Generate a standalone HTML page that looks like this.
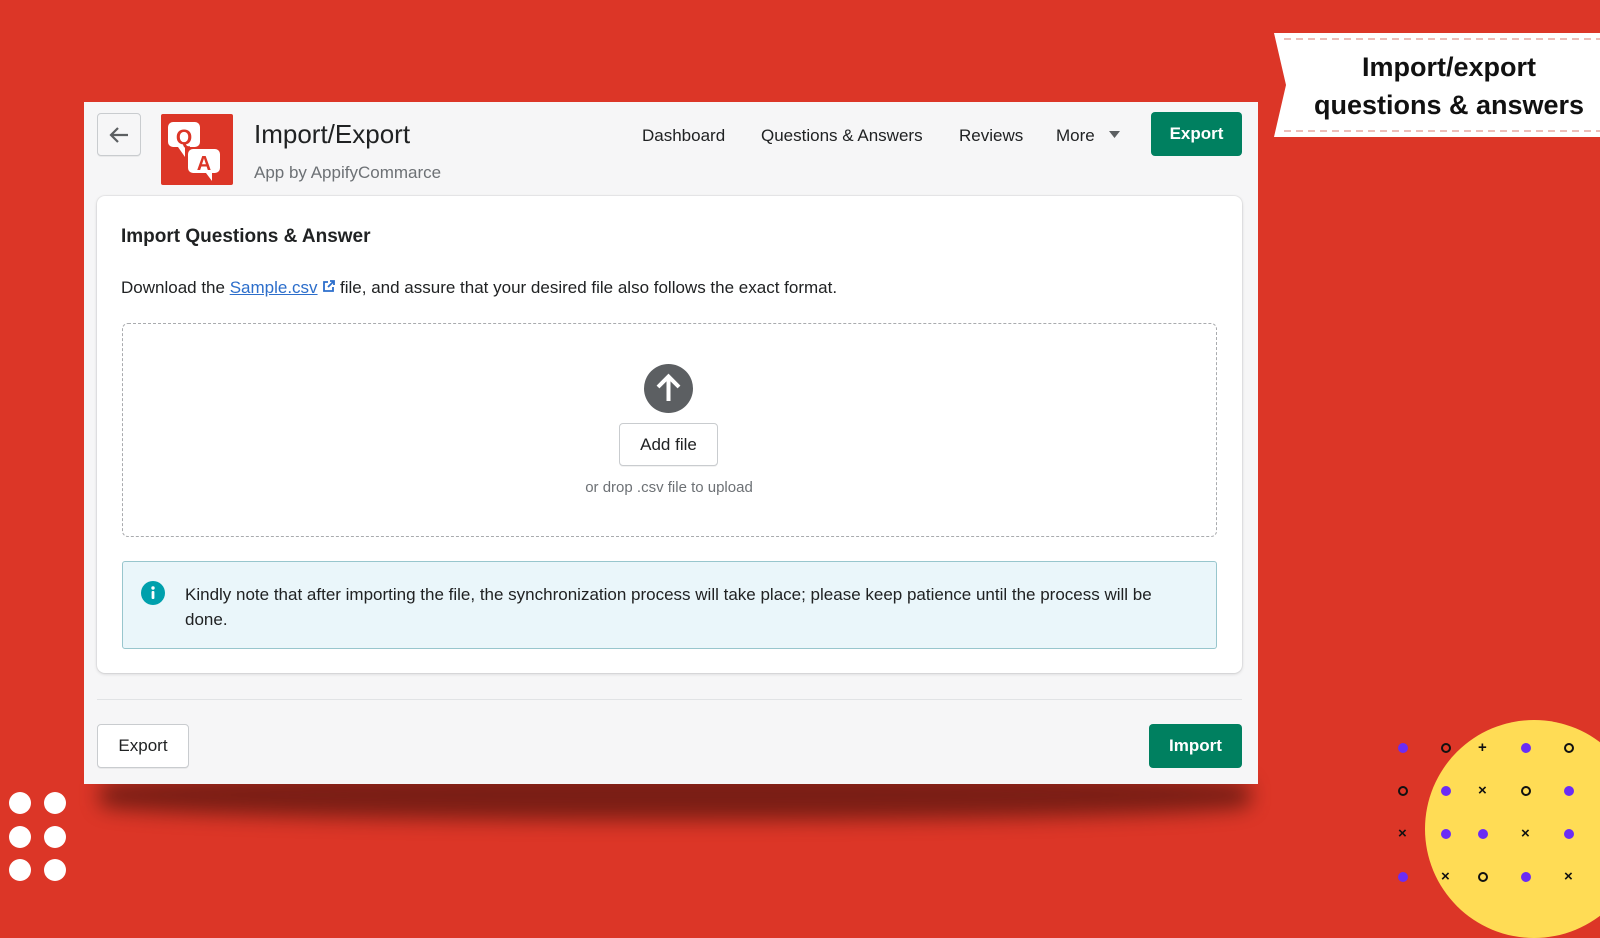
<!DOCTYPE html>
<html><head><meta charset="utf-8"><style>
*{box-sizing:border-box;margin:0;padding:0}
body{width:1600px;height:900px;background:#dc3627;position:relative;overflow:hidden;font-family:"Liberation Sans",sans-serif;color:#202223}
.abs{position:absolute}
.shadow{left:100px;top:770px;width:1150px;height:50px;background:#6a1a12;filter:blur(10px);border-radius:50%/30%;opacity:.85}
.panel{left:84px;top:102px;width:1174px;height:682px;background:#f6f6f7}
.btn{position:absolute;border:1px solid #c9cccf;background:#fff;border-radius:4px;font-size:17px;display:flex;align-items:center;justify-content:center;box-shadow:0 1px 0 rgba(0,0,0,.05)}
.gbtn{position:absolute;background:#008060;color:#fff;border-radius:4px;font-size:17px;font-weight:bold;display:flex;align-items:center;justify-content:center}
.nav{position:absolute;top:126px;font-size:17px;color:#202223}
.card{left:97px;top:196px;width:1145px;height:477px;background:#fff;border-radius:8px;box-shadow:0 0 0 1px rgba(63,63,68,.05),0 1px 3px rgba(63,63,68,.2)}
.dot{position:absolute;width:10px;height:10px;border-radius:50%;background:#6b2cf5;margin:-5px 0 0 -5px}
.o{position:absolute;width:10px;height:10px;border-radius:50%;border:2px solid #111;margin:-5px 0 0 -5px}
.x{position:absolute;font-size:15px;font-weight:bold;line-height:1;margin:-8px 0 0 -5px;color:#111}
.w{position:absolute;width:22px;height:22px;border-radius:50%;background:#fff}
</style></head><body>
<div class="abs shadow"></div>
<div class="abs panel"></div>
<div class="btn" style="left:97px;top:113px;width:44px;height:43px;background:#f6f6f7">
<svg width="22" height="18" viewBox="0 0 22 18"><path d="M20 9H3M10 2L3 9l7 7" stroke="#5c5f62" stroke-width="2.2" fill="none"/></svg></div>
<div class="abs" style="left:161px;top:114px;width:72px;height:71px;background:#dc3627;border-radius:2px">
<svg width="72" height="71" viewBox="0 0 72 71">
<path d="M12 8h22a5 5 0 015 5v15a5 5 0 01-5 5H24l0 10-7-10h-5a5 5 0 01-5-5V13a5 5 0 015-5z" fill="#fff"/>
<text x="23" y="30" font-size="21" font-weight="bold" fill="#dc3627" text-anchor="middle" font-family="Liberation Sans">Q</text>
<path d="M32 35h22a5 5 0 015 5v14a5 5 0 01-5 5h-3v8l-6-8H32a5 5 0 01-5-5V40a5 5 0 015-5z" fill="#fff"/>
<text x="43" y="56" font-size="20" font-weight="bold" fill="#dc3627" text-anchor="middle" font-family="Liberation Sans">A</text>
</svg></div>
<div class="abs" style="left:254px;top:119px;font-size:26px;color:#202223">Import/Export</div>
<div class="abs" style="left:254px;top:163px;font-size:17px;color:#6d7175">App by AppifyCommarce</div>
<div class="nav" style="left:642px">Dashboard</div>
<div class="nav" style="left:761px">Questions &amp; Answers</div>
<div class="nav" style="left:959px">Reviews</div>
<div class="nav" style="left:1056px">More</div>
<svg class="abs" style="left:1109px;top:131px" width="11" height="7"><path d="M0 0h11L5.5 7z" fill="#5c5f62"/></svg>
<div class="gbtn" style="left:1151px;top:112px;width:91px;height:44px">Export</div>

<div class="abs card"></div>
<div class="abs" style="left:121px;top:226px;font-size:19px;font-weight:bold;color:#202223">Import Questions &amp; Answer</div>
<div class="abs" style="left:121px;top:278px;font-size:17px;color:#202223">Download the <span style="color:#2c6ecb;text-decoration:underline">Sample.csv</span> <svg width="13" height="13" viewBox="0 0 13 13" style="vertical-align:0px"><path d="M6 2H2v9h9V7M8 1h4v4M12 1L6 7" stroke="#2c6ecb" stroke-width="1.8" fill="none"/></svg> file, and assure that your desired file also follows the exact format.</div>
<div class="abs" style="left:122px;top:323px;width:1095px;height:214px;border:1px dashed #a9abae;border-radius:6px"></div>
<svg class="abs" style="left:644px;top:364px" width="49" height="49" viewBox="0 0 49 49"><circle cx="24.5" cy="24.5" r="24.5" fill="#5c5f62"/><path d="M24.5 37V13M14 23l10.5-10.5L35 23" stroke="#fff" stroke-width="4" fill="none"/></svg>
<div class="btn" style="left:619px;top:423px;width:99px;height:43px">Add file</div>
<div class="abs" style="left:0;width:1338px;text-align:center;top:479px;font-size:15px;color:#6d7175">or drop .csv file to upload</div>
<div class="abs" style="left:122px;top:561px;width:1095px;height:88px;background:#eaf6fa;border:1px solid #98c6cd;border-radius:3px"></div>
<svg class="abs" style="left:141px;top:581px" width="24" height="24"><circle cx="12" cy="12" r="12" fill="#00a0ac"/><circle cx="12" cy="7" r="1.7" fill="#fff"/><rect x="10.6" y="10" width="2.8" height="8" rx="1" fill="#fff"/></svg>
<div class="abs" style="left:185px;top:582px;width:980px;font-size:17px;line-height:25px;color:#202223">Kindly note that after importing the file, the synchronization process will take place; please keep patience until the process will be done.</div>
<div class="abs" style="left:97px;top:699px;width:1145px;height:1px;background:#e1e3e5"></div>
<div class="btn" style="left:97px;top:724px;width:92px;height:44px">Export</div>
<div class="gbtn" style="left:1149px;top:724px;width:93px;height:44px">Import</div>

<svg class="abs" style="left:1274px;top:33px" width="326" height="104"><path d="M0 0H326V104H0L12 52z" fill="#fff"/><path d="M10 6H326M10 98H326" stroke="#e6a8a2" stroke-width="1.5" stroke-dasharray="7 5"/></svg>
<div class="abs" style="left:1290px;width:318px;top:48px;text-align:center;font-size:27px;font-weight:bold;line-height:38px;color:#111;white-space:nowrap">Import/export<br>questions &amp; answers</div>

<div class="w" style="left:9px;top:792px"></div><div class="w" style="left:44px;top:792px"></div>
<div class="w" style="left:9px;top:826px"></div><div class="w" style="left:44px;top:826px"></div>
<div class="w" style="left:9px;top:859px"></div><div class="w" style="left:44px;top:859px"></div>

<div class="abs" style="left:1425px;top:720px;width:218px;height:218px;border-radius:50%;background:#ffdc55"></div>
<div class="dot" style="left:1403px;top:748px"></div><div class="o" style="left:1446px;top:748px"></div><div class="x" style="left:1483px;top:748px">+</div><div class="dot" style="left:1526px;top:748px"></div><div class="o" style="left:1569px;top:748px"></div>
<div class="o" style="left:1403px;top:791px"></div><div class="dot" style="left:1446px;top:791px"></div><div class="x" style="left:1483px;top:791px">×</div><div class="o" style="left:1526px;top:791px"></div><div class="dot" style="left:1569px;top:791px"></div>
<div class="x" style="left:1403px;top:834px">×</div><div class="dot" style="left:1446px;top:834px"></div><div class="dot" style="left:1483px;top:834px"></div><div class="x" style="left:1526px;top:834px">×</div><div class="dot" style="left:1569px;top:834px"></div>
<div class="dot" style="left:1403px;top:877px"></div><div class="x" style="left:1446px;top:877px">×</div><div class="o" style="left:1483px;top:877px"></div><div class="dot" style="left:1526px;top:877px"></div><div class="x" style="left:1569px;top:877px">×</div>
</body></html>
